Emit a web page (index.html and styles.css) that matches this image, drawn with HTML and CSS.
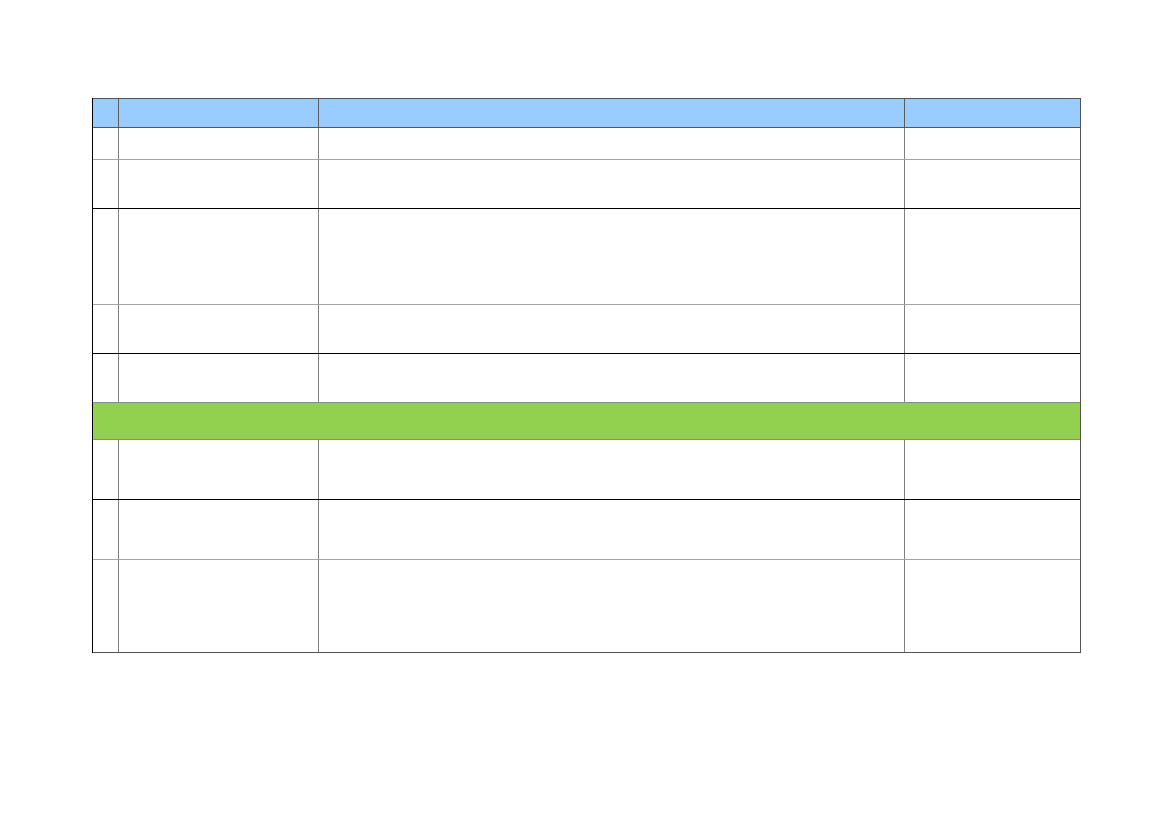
FILE: index.html
```
<!DOCTYPE html>
<html lang="en">
<head>
<meta charset="utf-8">
<title>Table</title>
<link rel="stylesheet" href="styles.css">
</head>
<body>
<div class="sheet">
  <div class="row head h30"><div class="c"></div><div class="c"></div><div class="c"></div><div class="c"></div></div>
  <div class="row light h32"><div class="c"></div><div class="c"></div><div class="c"></div><div class="c"></div></div>
  <div class="row dark h49"><div class="c"></div><div class="c"></div><div class="c"></div><div class="c"></div></div>
  <div class="row light h96"><div class="c"></div><div class="c"></div><div class="c"></div><div class="c"></div></div>
  <div class="row dark h49"><div class="c"></div><div class="c"></div><div class="c"></div><div class="c"></div></div>
  <div class="row mid h49"><div class="c"></div><div class="c"></div><div class="c"></div><div class="c"></div></div>
  <div class="row section h37"><div class="c span"></div></div>
  <div class="row dark h60"><div class="c"></div><div class="c"></div><div class="c"></div><div class="c"></div></div>
  <div class="row light h60"><div class="c"></div><div class="c"></div><div class="c"></div><div class="c"></div></div>
  <div class="row last h93"><div class="c"></div><div class="c"></div><div class="c"></div><div class="c"></div></div>
</div>
</body>
</html>
```
FILE: styles.css
```
html, body {
  margin: 0;
  padding: 0;
  background: #ffffff;
  font-family: "Liberation Sans", Arial, sans-serif;
}
.sheet {
  margin: 98px 0 0 92px;
  width: 989px;
  box-sizing: border-box;
  border-left: 1px solid #000000;
  border-right: 1px solid #555555;
  display: flex;
  flex-direction: column;
}
.row {
  display: grid;
  grid-template-columns: 26px 200px 586px 175px;
  box-sizing: border-box;
  border-bottom: 1px solid #555555;
}
.c {
  box-sizing: border-box;
  border-right: 1px solid #808080;
}
.c:last-child { border-right: none; }
.head {
  background: #99ccff;
  border-top: 1px solid #555555;
}
.head .c { border-right-color: #5c5c5c; }
.head .c:last-child { border-right: none; }
.light { border-bottom-color: #a6a6a6; }
.dark { border-bottom-color: #000000; }
.mid { border-bottom-color: #8a8a8a; }
.last { border-bottom-color: #555555; }
.section {
  background: #92d050;
  border-bottom-color: #8a8a8a;
}
.span { grid-column: 1 / -1; border-right: none; }
.h30 { height: 30px; }
.h32 { height: 32px; }
.h49 { height: 49px; }
.h96 { height: 96px; }
.h37 { height: 37px; }
.h60 { height: 60px; }
.h93 { height: 93px; }
```
